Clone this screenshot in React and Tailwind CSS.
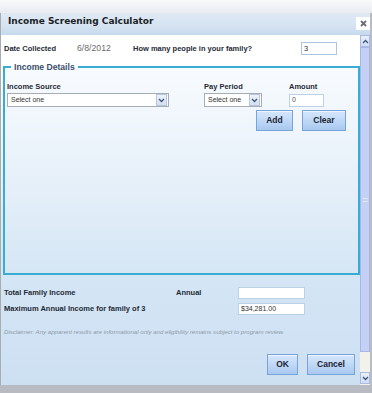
import React from 'react';

const labelCls = "text-[7.5px] leading-[10px] font-bold text-[#1f2a36]";

function Chevron({ up }) {
  return (
    <svg width="7" height="5" viewBox="0 0 7 5">
      <path d={up ? "M1 4 L3.5 1.5 L6 4" : "M1 1 L3.5 3.5 L6 1"} fill="none" stroke="#3f5478" strokeWidth="1.3" />
    </svg>
  );
}

function Select({ width }) {
  return (
    <div className={`${width} h-[14px] bg-white border border-[#a7adb6] flex items-center justify-between`}>
      <span className="pl-[3px] text-[7px] text-[#333]">Select one</span>
      <div className="w-[11px] h-[12px] mr-[1px] bg-[linear-gradient(to_bottom,#eef3fa,#d3e0f1)] border border-[#b7c6dc] flex items-center justify-center">
        <Chevron />
      </div>
    </div>
  );
}

function Btn({ children, width }) {
  return (
    <button className={`${width} h-[21px] border border-[#76a4dc] bg-[linear-gradient(to_bottom,#d6e7fc_0%,#c0d8f6_50%,#a8c8ef_100%)] shadow-[inset_0_1px_0_#eef5fe] text-[8.5px] font-bold text-[#1c2533]`}>
      {children}
    </button>
  );
}

function Field({ value }) {
  return (
    <div className="w-[67px] h-[12px] bg-white border border-[#bcd0e8] flex items-center pl-[2px] text-[7px] text-[#333]">
      {value}
    </div>
  );
}

export default function App() {
  return (
    <div className="w-[372px] h-[393px] bg-[#eef0f3] overflow-hidden flex flex-col font-['Liberation_Sans',Arial,sans-serif]">
      <div className="h-[13px] shrink-0 bg-[linear-gradient(to_bottom,#f8f9fb,#e8ebef)]" />
      <div className="flex-1 flex flex-col border-l border-[#a8adb4] border-r-2 border-r-[#b9bdc3] min-h-0">
        {/* title bar */}
        <div className="relative h-[22px] shrink-0 bg-[linear-gradient(to_bottom,#dfe9f4_0%,#d5e3f1_60%,#c5d9ee_100%)] pl-[7px] flex items-center">
          <span className="font-['DejaVu_Sans',Verdana,sans-serif] font-bold text-[9px] text-[#1a1f26] -mt-[4px]">Income Screening Calculator</span>
          <div className="absolute right-[0px] top-[4px] w-[14px] h-[13px] bg-white flex items-center justify-center">
            <svg width="7" height="7" viewBox="0 0 7 7">
              <path d="M1 1 L6 6 M6 1 L1 6" stroke="#6b6f75" strokeWidth="1.8" />
            </svg>
          </div>
        </div>

        <div className="flex flex-1 min-h-0">
          {/* content */}
          <div className="flex-1 flex flex-col bg-[linear-gradient(to_bottom,#ffffff_0%,#ffffff_8%,#d4e5f5_70%,#cde0f2_100%)]">
            <div className="flex items-center h-[13px] mt-[7px] pl-[3px]">
              <span className={`${labelCls} w-[73px]`}>Date Collected</span>
              <span className="w-[56px] text-[8.7px] text-[#6b6b6b]">6/8/2012</span>
              <span className={`${labelCls} w-[168px]`}>How many people in your family?</span>
              <div className="w-[36px] h-[13px] bg-white border border-[#a9c4e4] flex items-center pl-[2px] text-[7.5px] text-[#333]">3</div>
            </div>

            <fieldset className="ml-[2px] w-[357px] h-[213px] mt-[7px] border-2 border-[#39acd3] p-0 m-0 bg-[linear-gradient(to_bottom,#f8fbfe_0%,#e8f1fa_50%,#d5e6f5_100%)]">
              <legend className="ml-[6px] px-[3px] text-[8.6px] leading-[10px] font-bold text-[#3a4f6c]">Income Details</legend>
              <div className="pt-[10px] pl-[2px] pr-[12px]">
                <div className="flex">
                  <div className="w-[197px] flex flex-col gap-[1px]">
                    <span className={labelCls}>Income Source</span>
                    <Select width="w-[162px]" />
                  </div>
                  <div className="w-[85px] flex flex-col gap-[1px]">
                    <span className={labelCls}>Pay Period</span>
                    <Select width="w-[58px]" />
                  </div>
                  <div className="flex flex-col gap-[2px]">
                    <span className={labelCls}>Amount</span>
                    <div className="w-[35px] h-[13px] bg-white border border-[#bcd0e8] flex items-center pl-[2px] text-[7px] text-[#555]">0</div>
                  </div>
                </div>
                <div className="flex justify-end gap-[9px] mt-[3px]">
                  <Btn width="w-[37px]">Add</Btn>
                  <Btn width="w-[44px]">Clear</Btn>
                </div>
              </div>
            </fieldset>

            <div className="flex items-center mt-[12px] pl-[3px]">
              <span className={`${labelCls} w-[172px]`}>Total Family Income</span>
              <span className={`${labelCls} w-[62px]`}>Annual</span>
              <Field value="" />
            </div>
            <div className="flex items-center mt-[4px] pl-[3px]">
              <span className={`${labelCls} w-[234px]`}>Maximum Annual Income for family of 3</span>
              <Field value="$34,281.00" />
            </div>
            <p className="mt-[13px] pl-[3px] text-[6.1px] leading-[8px] italic text-[#8e9aa8]">
              Disclaimer: Any apparent results are informational only and eligibility remains subject to program review.
            </p>
            <div className="flex justify-end gap-[9px] mt-[18px] pr-[5px]">
              <Btn width="w-[31px]">OK</Btn>
              <Btn width="w-[48px]">Cancel</Btn>
            </div>
          </div>

          {/* scrollbar */}
          <div className="w-[10px] flex flex-col bg-[#f2f1ea]">
            <div className="h-[12px] bg-[linear-gradient(to_bottom,#e9effb,#cfdcf5)] border border-[#a9bbe2] flex items-center justify-center">
              <Chevron up />
            </div>
            <div className="h-[305px] bg-[#c4d0f6] border border-[#a6b6e6] flex items-center justify-center">
              <div className="w-[5px] h-[4px] border-y border-[#e4eafc]" />
            </div>
            <div className="h-[20px]" />
            <div className="h-[12px] bg-[linear-gradient(to_bottom,#e9effb,#cfdcf5)] border border-[#a9bbe2] flex items-center justify-center">
              <Chevron />
            </div>
          </div>
        </div>
      </div>
      <div className="h-[8px] shrink-0 bg-[#b8bcc2]" />
    </div>
  );
}
